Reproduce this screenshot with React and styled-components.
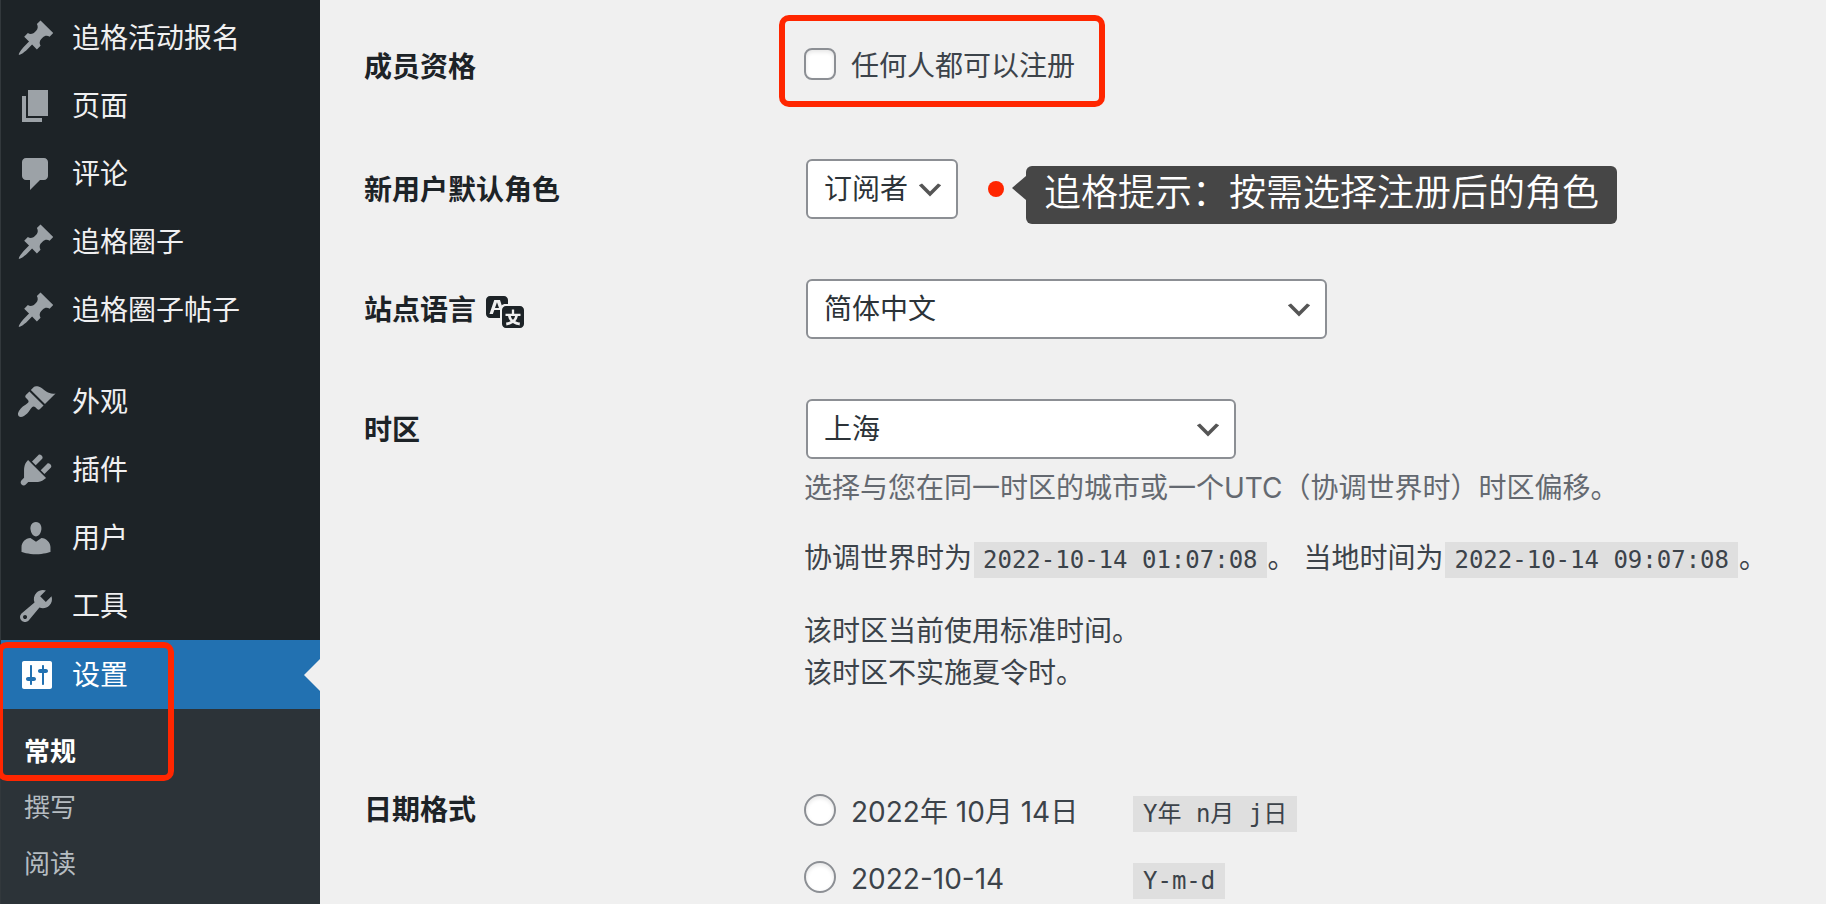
import React from "react";
import styled, { createGlobalStyle, css } from "styled-components";

const GlobalStyle = createGlobalStyle`
  *, *::before, *::after { box-sizing: border-box; }
  body {
    margin: 0;
    background: #f0f0f0;
    color: #3c434a;
    font-family: Inter, "Noto Sans CJK SC", sans-serif;
    font-size: 28px;
    line-height: 42px;
  }
`;

const Page = styled.div`
  display: flex;
  height: 100vh;
  overflow: hidden;
`;

/* ---------- admin menu ---------- */

const Sidebar = styled.nav`
  position: relative;
  flex: none;
  display: flex;
  flex-direction: column;
  width: 320px;
  padding-top: 4px;
  background: #1d2327;
  border-left: 1px solid #32383c;
`;

const MenuGroup = styled.ul`
  flex: none;
  margin: 0;
  padding: 0;
  list-style: none;

  & + & {
    margin-top: 24px;
  }
`;

const MenuLink = styled.a`
  position: relative;
  display: flex;
  align-items: center;
  gap: 16px;
  height: 68px;
  padding-left: 15px;
  color: #f0f0f1;
  text-decoration: none;

  svg {
    width: 40px;
    height: 40px;
    fill: #9ca2a7;
  }

  ${({ $current }) =>
    $current &&
    css`
      height: 69px;
      background: #2271b1;
      color: #fff;

      svg {
        fill: #fff;
      }

      &::after {
        content: "";
        position: absolute;
        top: 50%;
        right: 0;
        margin-top: -16px;
        border: 16px solid transparent;
        border-left-width: 0;
        border-right-color: #f0f0f0;
      }
    `}
`;

const Submenu = styled.ul`
  flex: 1;
  margin: 0;
  padding: 15px 0;
  list-style: none;
  background: #2c3338;
`;

const SubmenuLink = styled.a`
  display: block;
  padding-left: 23px;
  font-size: 26px;
  line-height: 56px;
  text-decoration: none;
  color: ${({ $current }) => ($current ? "#fff" : "#b5bcc1")};
  font-weight: ${({ $current }) => ($current ? 700 : 400)};
`;

const Highlight = styled.span`
  position: absolute;
  border: 6px solid #ff2600;
  border-radius: 10px;
  pointer-events: none;
`;

const MenuHighlight = styled(Highlight)`
  top: 642px;
  left: -4px;
  width: 177px;
  height: 139px;
`;

const FieldHighlight = styled(Highlight)`
  inset: -33px -30px -23px -25px;
`;

/* ---------- settings form ---------- */

const Content = styled.main`
  flex: 1;
  min-width: 0;
  padding: 18px 44px 0;
`;

const Row = styled.div`
  display: grid;
  grid-template-columns: 440px 1fr;
  padding: 30px 0;
`;

const TallRow = styled(Row)`
  padding-bottom: 45px;
`;

const ZoneRow = styled(Row)`
  padding-bottom: 67px;
`;

const Heading = styled.div`
  display: flex;
  align-items: center;
  gap: 10px;
  height: ${({ $short }) => ($short ? 36 : 60)}px;
  padding-top: 2px;
  color: #1d2327;
  font-weight: 700;

  svg {
    width: 40px;
    height: 40px;
    fill: #1d2327;
  }
`;

const Field = styled.div`
  display: flex;
  flex-direction: column;
  align-items: flex-start;
`;

const Choice = styled.label`
  position: relative;
  display: inline-flex;
  align-items: center;
  gap: 15px;
`;

const CheckChoice = styled(Choice)`
  height: 36px;
`;

const Tick = styled.input`
  appearance: none;
  flex: none;
  width: 32px;
  height: 32px;
  margin: 0 0 4px;
  background: #fff;
  border: 2px solid #8c8f94;
  border-radius: ${({ type }) => (type === "radio" ? "50%" : "8px")};
  box-shadow: inset 0 2px 4px rgba(0, 0, 0, 0.1);
`;

const Select = styled.select`
  appearance: none;
  height: 60px;
  width: ${({ $width }) => $width || "auto"};
  margin: 0 2px;
  padding: 0 47px 0 16px;
  border: 2px solid #8c8f94;
  border-radius: 6px;
  background: #fff
    url("data:image/svg+xml,%3Csvg xmlns='http://www.w3.org/2000/svg' viewBox='0 0 20 20'%3E%3Cpath d='M5 6l5 5 5-5 2 1-7 7-7-7 2-1z' fill='%23555'/%3E%3C/svg%3E")
    no-repeat right 10px top 55% / 32px 32px;
  color: #2c3338;
  font: inherit;
`;

const RoleLine = styled.div`
  display: flex;
  align-items: center;
  height: 60px;
`;

const Dot = styled.span`
  width: 16px;
  height: 16px;
  margin-left: 28px;
  border-radius: 50%;
  background: #ff2600;
`;

const Callout = styled.div`
  position: relative;
  margin: 12px 0 0 22px;
  padding: 0 18px;
  height: 58px;
  border-radius: 6px;
  background: #464646;
  color: #fff;
  font-size: 37px;
  font-weight: 350;
  line-height: 54px;
  white-space: nowrap;

  &::before {
    content: "";
    position: absolute;
    top: 10px;
    left: -14px;
    border: 12px solid transparent;
    border-left-width: 0;
    border-right: 14px solid #464646;
  }
`;

const Paragraph = styled.p`
  margin: 0 0 ${({ $gap }) => $gap || 0}px;
`;

const Description = styled(Paragraph)`
  margin: 8px 0 28px;
  color: #646970;
`;

const Code = styled.code`
  display: inline-block;
  margin: 0 1px 0 2px;
  padding: 3px 9px;
  background: #dfdfdf;
  font-family: "DejaVu Sans Mono", "Noto Sans CJK SC", monospace;
  font-size: 24px;
  line-height: 30px;
`;

const FormatList = styled.div`
  display: flex;
  flex-direction: column;
  gap: 25px;
`;

const FormatLine = styled.div`
  display: flex;
  align-items: center;
  height: 42px;

  ${Choice} {
    min-width: 327px;
  }

  ${Code} {
    margin-top: 4px;
    padding: 3px 10px;
  }
`;

/* ---------- icons ---------- */

const ICONS = {
  pin: "M10.44 3.02l1.82-1.82 6.36 6.35-1.83 1.82c-1.05-.68-2.48-.57-3.41.36l-.75.75c-.92.93-1.04 2.35-.35 3.41l-1.83 1.82-2.41-2.41-2.8 2.79c-.42.42-3.38 2.71-3.8 2.29s1.86-3.39 2.28-3.81l2.79-2.79L4.1 9.36l1.83-1.82c1.05.69 2.48.57 3.4-.36l.75-.75c.93-.92 1.05-2.35.36-3.41z",
  page: "M6 15V2h10v13H6zm-1 1h8v2H3V5h2v11z",
  comment:
    "M5 2h9c1.1 0 2 .9 2 2v7c0 1.1-.9 2-2 2h-2l-5 5v-5H5c-1.1 0-2-.9-2-2V4c0-1.1.9-2 2-2z",
  brush:
    "M14.48 11.06L7.41 3.99l1.5-1.5c.5-.56 2.3-.47 3.51.32 1.21.8 1.43 1.28 2.91 2.1 1.18.64 2.45 1.26 4.45.85zm-.71.71L6.7 4.7 4.93 6.47c-.39.39-.39 1.02 0 1.41l1.06 1.06c.39.39.39 1.03 0 1.42-.6.6-1.43 1.11-2.21 1.69-.35.26-.7.53-1.01.84C1.43 14.23.4 16.08 1.4 17.07c.99 1 2.84-.03 4.18-1.36.31-.31.58-.66.85-1.02.57-.78 1.08-1.61 1.69-2.21.39-.39 1.02-.39 1.41 0l1.06 1.06c.39.39 1.02.39 1.41 0z",
  plug: "M13.11 4.36L9.87 7.6 8 5.73l3.24-3.24c.35-.34 1.05-.2 1.56.32.52.51.66 1.21.31 1.55zm-8 1.77l.91-1.12 9.01 9.01-1.19.84c-.71.71-2.63 1.16-3.82 1.16H6.14L4.9 17.26c-.59.59-1.54.59-2.12 0-.59-.58-.59-1.53 0-2.12l1.24-1.24v-3.88c0-1.13.4-3.19 1.09-3.89zm7.26 3.97l3.24-3.24c.34-.35 1.04-.21 1.55.31.52.51.66 1.21.31 1.55l-3.24 3.25z",
  user: "M10 9.25c-2.27 0-2.73-3.44-2.73-3.44C7 4.02 7.82 2 9.97 2c2.16 0 2.98 2.02 2.71 3.81 0 0-.41 3.44-2.68 3.44zm0 2.57L12.72 10c2.39 0 4.52 2.33 4.52 4.53v2.49s-3.65 1.13-7.24 1.13c-3.65 0-7.24-1.13-7.24-1.13v-2.49c0-2.25 1.94-4.48 4.47-4.48z",
  wrench:
    "M16.68 9.77c-1.34 1.34-3.3 1.67-4.95.99l-5.41 6.52c-.99.99-2.59.99-3.58 0s-.99-2.59 0-3.57l6.52-5.42c-.68-1.65-.35-3.61.99-4.95 1.28-1.28 3.12-1.62 4.72-1.06l-2.89 2.89 2.82 2.82 2.86-2.87c.53 1.58.18 3.39-1.08 4.65zM3.81 16.21c.4.39 1.04.39 1.43 0 .4-.4.4-1.04 0-1.43-.39-.4-1.03-.4-1.43 0-.39.39-.39 1.03 0 1.43z",
  sliders:
    "M18 16V4c0-.55-.45-1-1-1H4c-.55 0-1 .45-1 1v12c0 .55.45 1 1 1h13c.55 0 1-.45 1-1zM8 11h1c.55 0 1 .45 1 1s-.45 1-1 1H8v1.5c0 .28-.22.5-.5.5s-.5-.22-.5-.5V13H6c-.55 0-1-.45-1-1s.45-1 1-1h1V5.5c0-.28.22-.5.5-.5s.5.22.5.5V11zm5-2h-1c-.55 0-1-.45-1-1s.45-1 1-1h1V5.5c0-.28.22-.5.5-.5s.5.22.5.5V7h1c.55 0 1 .45 1 1s-.45 1-1 1h-1v5.5c0 .28-.22.5-.5.5s-.5-.22-.5-.5V9z",
  translation:
    "M11 7H9.49c-.63 0-1.25.3-1.59.7L7 5H4.13l-2.39 7h1.69l.74-2H7v4H2c-1.1 0-2-.9-2-2V5c0-1.1.9-2 2-2h7c1.1 0 2 .9 2 2v2zM6.51 9H4.49l1-2.93zM10 8h7c1.1 0 2 .9 2 2v7c0 1.1-.9 2-2 2h-7c-1.1 0-2-.9-2-2v-7c0-1.1.9-2 2-2zm7.25 5v-1.08h-3.17V9.75h-1.16v2.17H9.75V13h1.28c.11.85.56 1.85 1.28 2.62-.87.36-1.89.62-2.31.62-.01.02.22.97.2 1.46.84 0 2.21-.5 3.28-1.15 1.09.65 2.48 1.15 3.34 1.15-.02-.49.2-1.44.2-1.46-.43 0-1.49-.27-2.38-.63.7-.77 1.14-1.77 1.25-2.61h1.36zm-3.81 1.93c-.5-.46-.85-1.13-1.01-1.93h2.09c-.17.8-.51 1.47-1 1.93l-.04.03s-.03-.02-.04-.03z",
};

const Icon = ({ name }) => (
  <svg viewBox="0 0 20 20" aria-hidden="true">
    <path d={ICONS[name]} />
  </svg>
);

const CONTENT_MENU = [
  ["pin", "追格活动报名"],
  ["page", "页面"],
  ["comment", "评论"],
  ["pin", "追格圈子"],
  ["pin", "追格圈子帖子"],
];

const ADMIN_MENU = [
  ["brush", "外观"],
  ["plug", "插件"],
  ["user", "用户"],
  ["wrench", "工具"],
  ["sliders", "设置"],
];

const SUBMENU = ["常规", "撰写", "阅读"];

const DATE_FORMATS = [
  ["2022年 10月 14日", "Y年 n月 j日"],
  ["2022-10-14", "Y-m-d"],
];

const Menu = ({ items, current }) => (
  <MenuGroup>
    {items.map(([icon, label]) => (
      <li key={label}>
        <MenuLink href="#" $current={label === current}>
          <Icon name={icon} />
          {label}
        </MenuLink>
      </li>
    ))}
  </MenuGroup>
);

export default function App() {
  return (
    <>
      <GlobalStyle />
      <Page>
        <Sidebar>
          <Menu items={CONTENT_MENU} />
          <Menu items={ADMIN_MENU} current="设置" />
          <Submenu>
            {SUBMENU.map((label, i) => (
              <li key={label}>
                <SubmenuLink href="#" $current={i === 0}>
                  {label}
                </SubmenuLink>
              </li>
            ))}
          </Submenu>
          <MenuHighlight />
        </Sidebar>

        <Content>
          <TallRow>
            <Heading $short>成员资格</Heading>
            <Field>
              <CheckChoice>
                <Tick type="checkbox" />
                任何人都可以注册
                <FieldHighlight />
              </CheckChoice>
            </Field>
          </TallRow>

          <Row>
            <Heading as="label" htmlFor="role">
              新用户默认角色
            </Heading>
            <RoleLine>
              <Select id="role">
                <option>订阅者</option>
              </Select>
              <Dot />
              <Callout>追格提示：按需选择注册后的角色</Callout>
            </RoleLine>
          </Row>

          <Row>
            <Heading as="label" htmlFor="language">
              站点语言
              <Icon name="translation" />
            </Heading>
            <Field>
              <Select id="language" $width="521px">
                <option>简体中文</option>
              </Select>
            </Field>
          </Row>

          <ZoneRow>
            <Heading as="label" htmlFor="timezone">
              时区
            </Heading>
            <Field>
              <Select id="timezone" $width="430px">
                <option>上海</option>
              </Select>
              <Description>
                选择与您在同一时区的城市或一个UTC（协调世界时）时区偏移。
              </Description>
              <Paragraph $gap={31}>
                协调世界时为<Code>2022-10-14 01:07:08</Code>。 当地时间为
                <Code>2022-10-14 09:07:08</Code>。
              </Paragraph>
              <Paragraph>
                该时区当前使用标准时间。
                <br />
                该时区不实施夏令时。
              </Paragraph>
            </Field>
          </ZoneRow>

          <Row>
            <Heading $short>日期格式</Heading>
            <FormatList>
              {DATE_FORMATS.map(([sample, format]) => (
                <FormatLine key={format}>
                  <Choice>
                    <Tick type="radio" name="date_format" />
                    {sample}
                  </Choice>
                  <Code>{format}</Code>
                </FormatLine>
              ))}
            </FormatList>
          </Row>
        </Content>
      </Page>
    </>
  );
}
